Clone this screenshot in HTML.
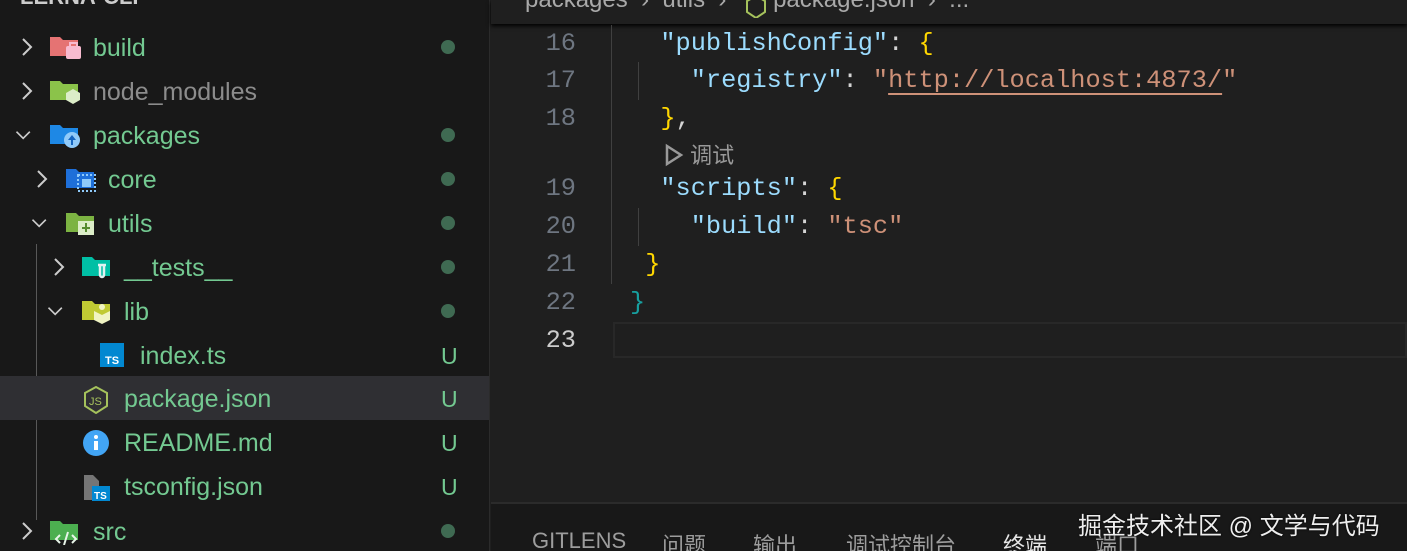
<!DOCTYPE html>
<html><head><meta charset="utf-8"><style>
*{margin:0;padding:0;box-sizing:border-box}
html,body{overflow:hidden}
body{width:1407px;height:551px;overflow:hidden;background:#1f1f1f;position:relative;font-family:"Segoe UI","Liberation Sans","Noto Sans CJK SC",sans-serif}
#side{position:absolute;left:0;top:0;width:490px;height:551px;background:#181818;border-right:1px solid #2b2b2b;overflow:hidden}
.row{position:absolute;left:0;width:490px;height:44px;font-size:25px;color:#73c991;line-height:46px}
.row .t{position:absolute;top:0}
.chev{position:absolute;top:0;width:20px;height:44px}
.dot{position:absolute;left:441px;top:15px;width:14px;height:14px;border-radius:50%;background:#3f6a52}
.u{position:absolute;left:441px;top:0;color:#73c991;font-size:23px}
.ic{position:absolute;top:10px}
.guide{position:absolute;width:1px;background:#585858}
#ed{position:absolute;left:491px;top:0;right:0;height:502px}
.ln{position:absolute;left:491px;width:85px;text-align:right;font-family:"Liberation Mono",monospace;font-size:25.3px;color:#6e7681;line-height:40px}
.code{position:absolute;left:630px;font-family:"Liberation Mono",monospace;font-size:25.3px;line-height:40px;white-space:pre;color:#d4d4d4}
.k{color:#9cdcfe}.s{color:#ce9178}.y{color:#ffd700}
#panel{position:absolute;left:491px;top:502px;width:916px;height:49px;background:#181818;border-top:2px solid #2b2b2b;overflow:hidden}
.tab{position:absolute;top:24px;font-size:22px;color:#9d9d9d;font-family:"Liberation Sans","Noto Sans CJK SC",sans-serif}
</style></head><body>
<div id="side">
<div style="position:absolute;left:20px;top:-16px;font-size:22px;font-weight:bold;color:#ccc;font-family:'Liberation Sans',sans-serif">LERNA-CLI</div>
<div class="guide" style="left:36px;top:244px;height:276px"></div>
<div class="row" style="top:25px"><svg class="chev" style="left:18px" viewBox="0 0 20 44"><path d="M5 14l8 8-8 8" stroke="#ccc" stroke-width="2" fill="none"/></svg>
<svg class="ic" style="left:50px" width="32" height="26" viewBox="0 0 32 26"><path d="M0 2h10l3 3h15v16H0z" fill="#e57373"/><rect x="16" y="11" width="15" height="13" rx="2" fill="#f8bbd0"/><rect x="20" y="8" width="7" height="4" fill="none" stroke="#f8bbd0" stroke-width="2"/></svg>
<span class="t" style="left:93px">build</span><div class="dot"></div></div>

<div class="row" style="top:69px;color:#8c8c8c"><svg class="chev" style="left:18px" viewBox="0 0 20 44"><path d="M5 14l8 8-8 8" stroke="#ccc" stroke-width="2" fill="none"/></svg>
<svg class="ic" style="left:50px" width="32" height="26" viewBox="0 0 32 26"><path d="M0 2h10l3 3h15v16H0z" fill="#8bc34a"/><path d="M23 10l7 4v7l-7 4-7-4v-7z" fill="#dcedc8"/></svg>
<span class="t" style="left:93px">node_modules</span></div>

<div class="row" style="top:113px"><svg class="chev" style="left:14px" viewBox="0 0 24 44"><path d="M3 18l8 8 8-8" stroke="#ccc" stroke-width="2" fill="none"/></svg>
<svg class="ic" style="left:50px" width="32" height="26" viewBox="0 0 32 26"><path d="M0 2h10l3 3h15v16H0z" fill="#1e88e5"/><circle cx="22" cy="17" r="8" fill="#90caf9"/><path d="M22 12l-4 5h3v5h2v-5h3z" fill="#1565c0"/></svg>
<span class="t" style="left:93px">packages</span><div class="dot"></div></div>

<div class="row" style="top:157px"><svg class="chev" style="left:33px" viewBox="0 0 20 44"><path d="M5 14l8 8-8 8" stroke="#ccc" stroke-width="2" fill="none"/></svg>
<svg class="ic" style="left:66px" width="32" height="26" viewBox="0 0 32 26"><path d="M0 2h10l3 3h15v16H0z" fill="#1e6fd9"/><rect x="12" y="8" width="17" height="16" fill="none" stroke="#90caf9" stroke-width="2" stroke-dasharray="2 2"/><rect x="16" y="12" width="9" height="8" fill="#90caf9"/></svg>
<span class="t" style="left:108px">core</span><div class="dot"></div></div>

<div class="row" style="top:201px"><svg class="chev" style="left:30px" viewBox="0 0 24 44"><path d="M3 18l8 8 8-8" stroke="#ccc" stroke-width="2" fill="none"/></svg>
<svg class="ic" style="left:66px" width="32" height="26" viewBox="0 0 32 26"><path d="M0 2h10l3 3h15v16H0z" fill="#7cb342"/><rect x="12" y="10" width="16" height="14" fill="#dcedc8"/><path d="M20 12v9M16 17h8" stroke="#558b2f" stroke-width="2"/></svg>
<span class="t" style="left:108px">utils</span><div class="dot"></div></div>

<div class="row" style="top:245px"><svg class="chev" style="left:50px" viewBox="0 0 20 44"><path d="M5 14l8 8-8 8" stroke="#ccc" stroke-width="2" fill="none"/></svg>
<svg class="ic" style="left:82px" width="32" height="26" viewBox="0 0 32 26"><path d="M0 2h10l3 3h15v16H0z" fill="#00bfa5"/><path d="M16 10h8M18 10v10a2 2 0 0 0 4 0V10" stroke="#e0f2f1" stroke-width="2.5" fill="none"/></svg>
<span class="t" style="left:124px">__tests__</span><div class="dot"></div></div>

<div class="row" style="top:289px"><svg class="chev" style="left:46px" viewBox="0 0 24 44"><path d="M3 18l8 8 8-8" stroke="#ccc" stroke-width="2" fill="none"/></svg>
<svg class="ic" style="left:82px" width="32" height="26" viewBox="0 0 32 26"><path d="M0 2h10l3 3h15v16H0z" fill="#c0ca33"/><path d="M12 12l8 4 8-4v9l-8 4-8-4z" fill="#f0f4c3"/><circle cx="20" cy="8" r="3" fill="#f0f4c3"/></svg>
<span class="t" style="left:124px">lib</span><div class="dot"></div></div>

<div class="row" style="top:333px"><svg class="ic" style="left:100px" width="24" height="24" viewBox="0 0 24 24"><rect width="24" height="24" fill="#0288d1"/><text x="5" y="21" font-size="11" font-weight="bold" fill="#fff" font-family="Liberation Sans">TS</text></svg>
<span class="t" style="left:140px">index.ts</span><span class="u">U</span></div>

<div class="row" style="top:376px;background:#2f2f33"><svg class="ic" style="left:83px" width="26" height="28" viewBox="0 0 26 28"><path d="M13 1l11 6v13l-11 7-11-7V7z" fill="none" stroke="#a5c25c" stroke-width="2"/><text x="6" y="19" font-size="11" fill="#a5c25c" font-family="Liberation Sans">JS</text></svg>
<span class="t" style="left:124px">package.json</span><span class="u">U</span></div>

<div class="row" style="top:420px"><svg class="ic" style="left:83px" width="26" height="26" viewBox="0 0 26 26"><circle cx="13" cy="13" r="13" fill="#42a5f5"/><rect x="11" y="11" width="4" height="9" fill="#fff"/><circle cx="13" cy="7" r="2" fill="#fff"/></svg>
<span class="t" style="left:124px">README.md</span><span class="u">U</span></div>

<div class="row" style="top:464px"><svg class="ic" style="left:83px" width="28" height="28" viewBox="0 0 28 28"><path d="M1 1h9l6 6v19H1z" fill="#757575"/><rect x="9" y="12" width="18" height="15" fill="#0288d1"/><text x="11" y="25" font-size="10" font-weight="bold" fill="#fff" font-family="Liberation Sans">TS</text></svg>
<span class="t" style="left:124px">tsconfig.json</span><span class="u">U</span></div>

<div class="row" style="top:509px"><svg class="chev" style="left:18px" viewBox="0 0 20 44"><path d="M5 14l8 8-8 8" stroke="#ccc" stroke-width="2" fill="none"/></svg>
<svg class="ic" style="left:50px" width="32" height="26" viewBox="0 0 32 26"><path d="M0 2h10l3 3h15v16H0z" fill="#4caf50"/><path d="M10 16l-4 4 4 4M22 16l4 4-4 4M18 13l-4 13" stroke="#e8f5e9" stroke-width="2" fill="none"/></svg>
<span class="t" style="left:93px">src</span><div class="dot"></div></div>
</div>

<div id="ed">
<div style="position:absolute;left:0;top:0;right:0;height:24px;background:#1f1f1f;box-shadow:0 2px 4px #000"></div>
<div style="position:absolute;left:34px;top:-14px;font-size:24px;color:#a9a9a9;white-space:pre">packages  ›  utils  ›       package.json  ›  ...</div>
<svg style="position:absolute;left:254px;top:-4px" width="22" height="22" viewBox="0 0 22 22"><path d="M11 0l9 5v11l-9 6-9-6V5z" fill="none" stroke="#a5c25c" stroke-width="2"/></svg>
</div>
<div style="position:absolute;left:613px;top:322px;right:0;height:36px;border:2px solid #282828"></div>
<div class="guide" style="left:611px;top:25px;height:259px;background:#404040"></div>
<div class="guide" style="left:638px;top:62px;height:38px;background:#404040"></div>
<div class="guide" style="left:638px;top:208px;height:38px;background:#404040"></div>

<div class="ln" style="top:24px">16</div>
<div class="ln" style="top:61px">17</div>
<div class="ln" style="top:99px">18</div>
<div class="ln" style="top:169px">19</div>
<div class="ln" style="top:207px">20</div>
<div class="ln" style="top:245px">21</div>
<div class="ln" style="top:283px">22</div>
<div class="ln" style="top:321px;color:#ccc">23</div>

<div class="code" style="top:24px">  <span class="k">"publishConfig"</span>: <span class="y">{</span></div>
<div class="code" style="top:61px">    <span class="k">"registry"</span>: <span class="s">"<u style="text-underline-offset:6px">http://localhost:4873/</u>"</span></div>
<div class="code" style="top:99px">  <span class="y">}</span>,</div>
<div style="position:absolute;left:664px;top:138px;font-size:22px;color:#999;font-family:'Liberation Sans','Noto Sans CJK SC',sans-serif"><svg width="20" height="24" viewBox="0 0 20 24" style="vertical-align:-4px"><path d="M3 3l14 9-14 9z" fill="none" stroke="#999" stroke-width="2.5"/></svg> 调试</div>
<div class="code" style="top:169px">  <span class="k">"scripts"</span>: <span class="y">{</span></div>
<div class="code" style="top:207px">    <span class="k">"build"</span>: <span class="s">"tsc"</span></div>
<div class="code" style="top:245px"> <span class="y">}</span></div>
<div class="code" style="top:283px"><span style="color:#179f9f">}</span></div>

<div id="panel">
<span class="tab" style="left:41px">GITLENS</span>
<span class="tab" style="left:171px">问题</span>
<span class="tab" style="left:262px">输出</span>
<span class="tab" style="left:355px">调试控制台</span>
<span class="tab" style="left:512px;color:#e7e7e7">终端</span>
<span class="tab" style="left:604px">端口</span>
<span style="position:absolute;left:587px;top:2px;font-size:24px;color:#eee;font-family:'Liberation Sans','Noto Sans CJK SC',sans-serif;text-shadow:0 0 2px #000">掘金技术社区 @ 文学与代码</span>
</div>
</body></html>
